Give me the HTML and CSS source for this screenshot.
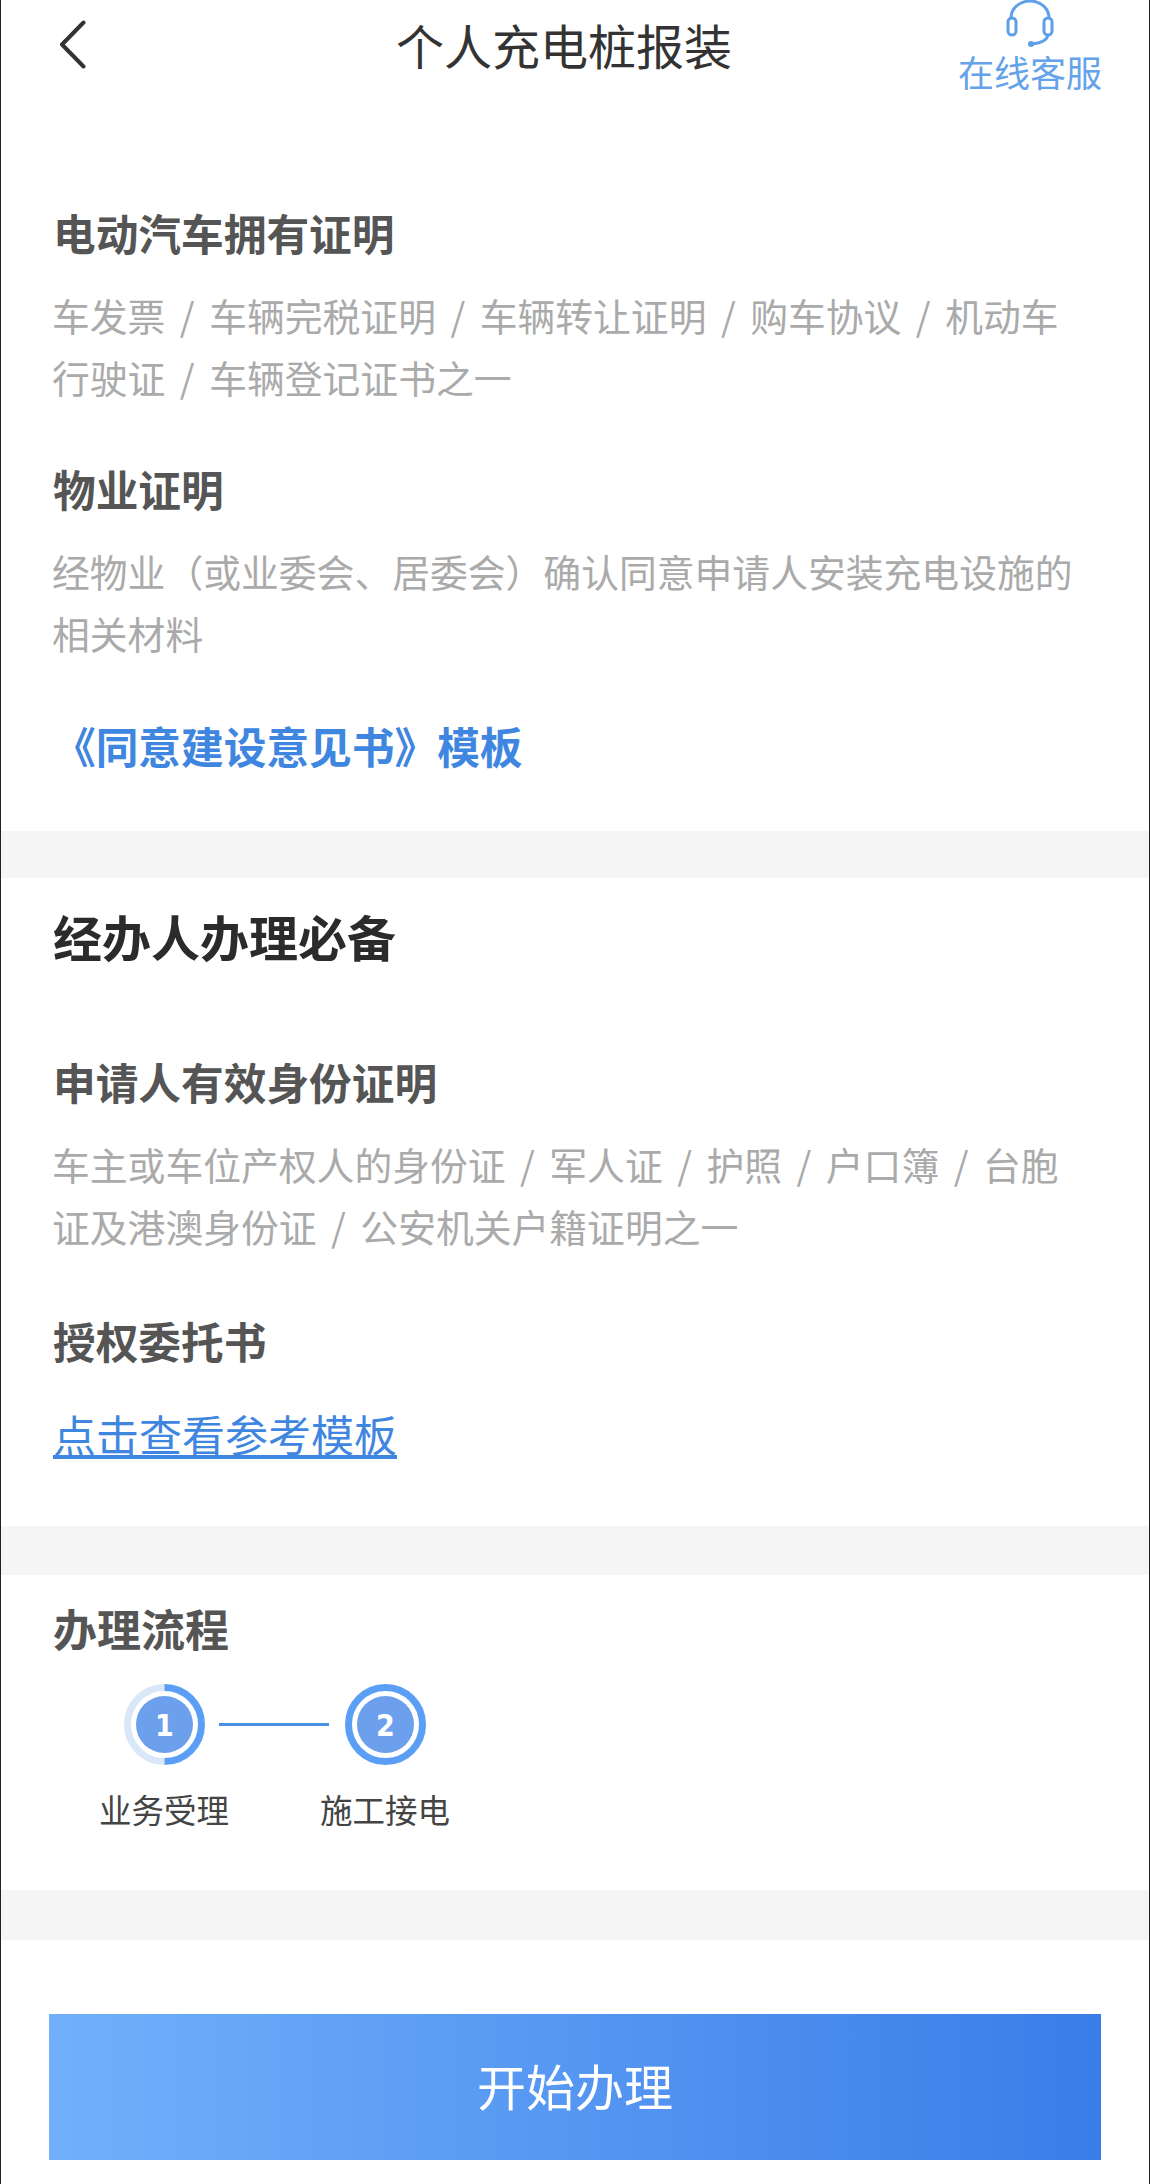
FILE: index.html
```html
<!DOCTYPE html>
<html lang="zh-CN">
<head>
    <meta charset="UTF-8">
    <meta name="viewport" content="width=device-width, initial-scale=1.0">
    <title>个人充电桩报装</title>
    <link rel="stylesheet" href="styles.css">
</head>
<body>
    <div class="page">
        <div class="nav">
            <svg class="back-icon" width="27" height="49" viewBox="0 0 27 49">
                <path d="M24.5 2.5 L3 24.5 L24.5 46.5" fill="none" stroke="#333" stroke-width="4" stroke-linecap="round" stroke-linejoin="round"/>
            </svg>
            <div class="nav-title">个人充电桩报装</div>
            <div class="service">
                <svg class="service-icon" width="48" height="47" viewBox="0 0 48 47">
                    <path d="M5 18 A19 17 0 0 1 43 18" fill="none" stroke="#5f9fe8" stroke-width="3"/>
                    <rect x="2" y="18" width="8" height="17" rx="4" fill="none" stroke="#5f9fe8" stroke-width="3"/>
                    <rect x="38" y="18" width="8" height="17" rx="4" fill="none" stroke="#5f9fe8" stroke-width="3"/>
                    <path d="M42 35 C41 40 36 43 26 44" fill="none" stroke="#5f9fe8" stroke-width="3"/>
                    <circle cx="25" cy="44" r="3" fill="#5f9fe8"/>
                </svg>
                <div class="service-label">在线客服</div>
            </div>
        </div>

        <div class="section section-first">
            <h3>电动汽车拥有证明</h3>
            <p>车发票 / 车辆完税证明 / 车辆转让证明 / 购车协议 / 机动车行驶证 / 车辆登记证书之一</p>
            <h3>物业证明</h3>
            <p>经物业（或业委会、居委会）确认同意申请人安装充电设施的相关材料</p>
            <a class="template-link">《同意建设意见书》模板</a>
        </div>

        <div class="section section-agent">
            <h2>经办人办理必备</h2>
            <h3>申请人有效身份证明</h3>
            <p>车主或车位产权人的身份证 / 军人证 / 护照 / 户口簿 / 台胞证及港澳身份证 / 公安机关户籍证明之一</p>
            <h3>授权委托书</h3>
            <a class="sample-link">点击查看参考模板</a>
        </div>

        <div class="section section-flow">
            <h3>办理流程</h3>
            <div class="steps">
                <div class="step">
                    <svg width="81" height="81" viewBox="0 0 81 81">
                        <path d="M40.5 3.5 A37 37 0 0 0 40.5 77.5" fill="none" stroke="#d9e7f8" stroke-width="7"/>
                        <path d="M40.5 3.5 A37 37 0 0 1 40.5 77.5" fill="none" stroke="#5b9ef5" stroke-width="7"/>
                        <circle cx="40.5" cy="40.5" r="28.5" fill="#6c9fec"/>
                        <text class="step-num" x="40.5" y="51.5" text-anchor="middle">1</text>
                    </svg>
                    <div class="step-label">业务受理</div>
                </div>
                <div class="step-line"></div>
                <div class="step">
                    <svg width="81" height="81" viewBox="0 0 81 81">
                        <circle cx="40.5" cy="40.5" r="37" fill="none" stroke="#5b9ef5" stroke-width="7"/>
                        <circle cx="40.5" cy="40.5" r="28.5" fill="#6c9fec"/>
                        <text class="step-num" x="40.5" y="51.5" text-anchor="middle">2</text>
                    </svg>
                    <div class="step-label">施工接电</div>
                </div>
            </div>
        </div>

        <div class="footer">
            <button class="start-btn" type="button">开始办理</button>
        </div>
    </div>
</body>
</html>
```

FILE: styles.css
```css
* {
    box-sizing: border-box;
}
body {
    margin: 0;
    font-family: "Noto Sans CJK SC", "Noto Sans", sans-serif;
    background-color: #fff;
}
.page {
    width: 1150px;
    height: 2184px;
    overflow: hidden;
    background-color: #f5f5f5;
    border-left: 1px solid #222;
    border-right: 1px solid #222;
}
.nav {
    display: flex;
    align-items: flex-start;
    height: 120px;
    padding: 0 47px 0 58px;
    background-color: #fff;
}
.back-icon {
    display: block;
    margin-top: 20px;
}
.nav-title {
    margin: 14px 0 0 310px;
    font-size: 48px;
    line-height: 60px;
    color: #333;
}
.service {
    margin-left: auto;
    width: 144px;
    text-align: center;
}
.service-icon {
    display: block;
    margin: 0 auto;
}
.service-label {
    margin-top: 6px;
    font-size: 36px;
    line-height: 36px;
    color: #64a2ea;
}
.section {
    padding: 0 60px 0 52px;
    background-color: #fff;
}
.section-first {
    height: 711px;
    padding-top: 82px;
}
.section-agent {
    height: 648px;
    margin-top: 47px;
    padding-top: 23px;
}
.section-agent p {
    margin-bottom: 53px;
}
.section-flow {
    height: 315px;
    margin-top: 49px;
    padding-top: 23px;
}
.section-flow h3 {
    font-size: 44px;
}
h2 {
    margin: 0 0 80px;
    font-size: 49px;
    line-height: 70px;
    font-weight: 700;
    color: #2b2b2b;
}
h3 {
    margin: 0;
    font-size: 42.7px;
    line-height: 60px;
    font-weight: 700;
    color: #555;
}
.section p {
    margin-top: 22px;
    margin-left: -1px;
    font-size: 37.8px;
    line-height: 62px;
    word-spacing: 6px;
    color: #aaa;
}
.section-first p {
    margin-bottom: 50px;
}
.template-link {
    display: block;
    margin: 51px 0 0;
    font-size: 42.7px;
    line-height: 60px;
    font-weight: 700;
    color: #3f86e0;
}
.sample-link {
    display: block;
    margin-top: 33px;
    font-size: 43px;
    line-height: 60px;
    color: #3f86e0;
    text-decoration: underline;
}
.steps {
    display: flex;
    margin: 26px 0 0 46px;
}
.step {
    display: flex;
    flex-direction: column;
    align-items: center;
    width: 130px;
}
.step svg {
    display: block;
}
.step-num {
    font-family: "DejaVu Sans", sans-serif;
    font-size: 30px;
    font-weight: 700;
    font-stretch: condensed;
    fill: #fff;
}
.step-line {
    flex: none;
    width: 110px;
    height: 3px;
    margin: 39px -9px 0 -10px;
    background-color: #4a90e2;
}
.step-label {
    margin-top: 20px;
    font-size: 32.5px;
    line-height: 48px;
    color: #444;
    white-space: nowrap;
}
.footer {
    height: 245px;
    margin-top: 50px;
    padding: 74px 48px 0;
    background-color: #fff;
}
.start-btn {
    display: block;
    width: 100%;
    height: 146px;
    border: none;
    padding: 0 0 6px;
    font-family: inherit;
    font-size: 49px;
    color: #fff;
    background: linear-gradient(90deg, #70b0fb, #3a7de8);
}
```
